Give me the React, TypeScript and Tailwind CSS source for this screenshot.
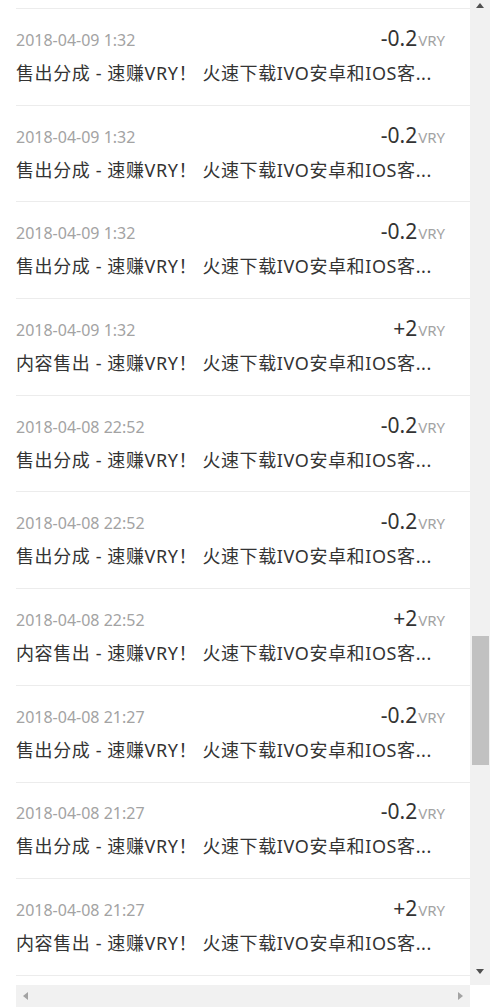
import React from 'react'

type Record = {
  time: string
  amount: string
  title: string
}

const records: Record[] = [
  { time: '2018-04-09 1:32', amount: '-0.2', title: '售出分成 - 速赚VRY！ 火速下载IVO安卓和IOS客...' },
  { time: '2018-04-09 1:32', amount: '-0.2', title: '售出分成 - 速赚VRY！ 火速下载IVO安卓和IOS客...' },
  { time: '2018-04-09 1:32', amount: '-0.2', title: '售出分成 - 速赚VRY！ 火速下载IVO安卓和IOS客...' },
  { time: '2018-04-09 1:32', amount: '+2', title: '内容售出 - 速赚VRY！ 火速下载IVO安卓和IOS客...' },
  { time: '2018-04-08 22:52', amount: '-0.2', title: '售出分成 - 速赚VRY！ 火速下载IVO安卓和IOS客...' },
  { time: '2018-04-08 22:52', amount: '-0.2', title: '售出分成 - 速赚VRY！ 火速下载IVO安卓和IOS客...' },
  { time: '2018-04-08 22:52', amount: '+2', title: '内容售出 - 速赚VRY！ 火速下载IVO安卓和IOS客...' },
  { time: '2018-04-08 21:27', amount: '-0.2', title: '售出分成 - 速赚VRY！ 火速下载IVO安卓和IOS客...' },
  { time: '2018-04-08 21:27', amount: '-0.2', title: '售出分成 - 速赚VRY！ 火速下载IVO安卓和IOS客...' },
  { time: '2018-04-08 21:27', amount: '+2', title: '内容售出 - 速赚VRY！ 火速下载IVO安卓和IOS客...' },
]

function RecordRow({ time, amount, title }: Record) {
  return (
    <div className="h-[96.7px] shrink-0 border-b border-[#ececec] flex flex-col justify-center gap-[10px] pr-[25px] pb-[2px]">
      <div className="flex items-baseline justify-between h-[24px] leading-[24px]">
        <span className="text-[16px] text-[#a3a3a3]">{time}</span>
        <span className="flex items-baseline">
          <span className="text-[21px] text-[#333]">{amount}</span>
          <span className="text-[15px] text-[#a3a3a3] ml-[1px]">VRY</span>
        </span>
      </div>
      <div className="h-[26px] leading-[26px] text-[18px] tracking-[0.6px] text-[#333] whitespace-nowrap overflow-hidden">
        {title}
      </div>
    </div>
  )
}

function Arrow({ dir, color }: { dir: 'up' | 'down' | 'left' | 'right'; color: string }) {
  const pts = {
    up: '0,5 4,0 8,5',
    down: '0,0 8,0 4,5',
    left: '5,0 5,8 0,4',
    right: '0,0 0,8 5,4',
  }[dir]
  const vertical = dir === 'up' || dir === 'down'
  return (
    <svg width={vertical ? 8 : 5} height={vertical ? 5 : 8} viewBox={vertical ? '0 0 8 5' : '0 0 5 8'}>
      <polygon points={pts} fill={color} />
    </svg>
  )
}

export default function App() {
  return (
    <div className="flex h-[1007px] w-[493px] bg-white overflow-hidden font-['Noto_Sans','Noto_Sans_CJK_SC',sans-serif]">
      <div className="w-4 shrink-0" />
      <div className="flex flex-col w-[474px] shrink-0">
        <div className="flex flex-1 min-h-0">
          <div className="w-[454px] flex flex-col">
            <div className="h-[9px] shrink-0 border-b border-[#ececec]" />
            {records.map((r, i) => (
              <RecordRow key={i} {...r} />
            ))}
          </div>
          <div className="w-[20px] bg-[#f1f1f1] flex flex-col items-center">
            <div className="h-[9px] flex items-center justify-center pt-[1px]">
              <Arrow dir="up" color="#505050" />
            </div>
            <div className="flex-1 flex flex-col">
              <div className="h-[627px]" />
              <div className="w-[17px] h-[129px] bg-[#c1c1c1]" />
            </div>
            <div className="h-[22px] flex items-center justify-center pb-[6px]">
              <Arrow dir="down" color="#505050" />
            </div>
          </div>
        </div>
        <div className="flex h-[22px] shrink-0">
          <div className="w-[454px] bg-[#f1f1f1] flex items-center justify-between px-[7px]">
            <Arrow dir="left" color="#a3a3a3" />
            <Arrow dir="right" color="#a3a3a3" />
          </div>
          <div className="w-[20px] bg-white" />
        </div>
      </div>
    </div>
  )
}
